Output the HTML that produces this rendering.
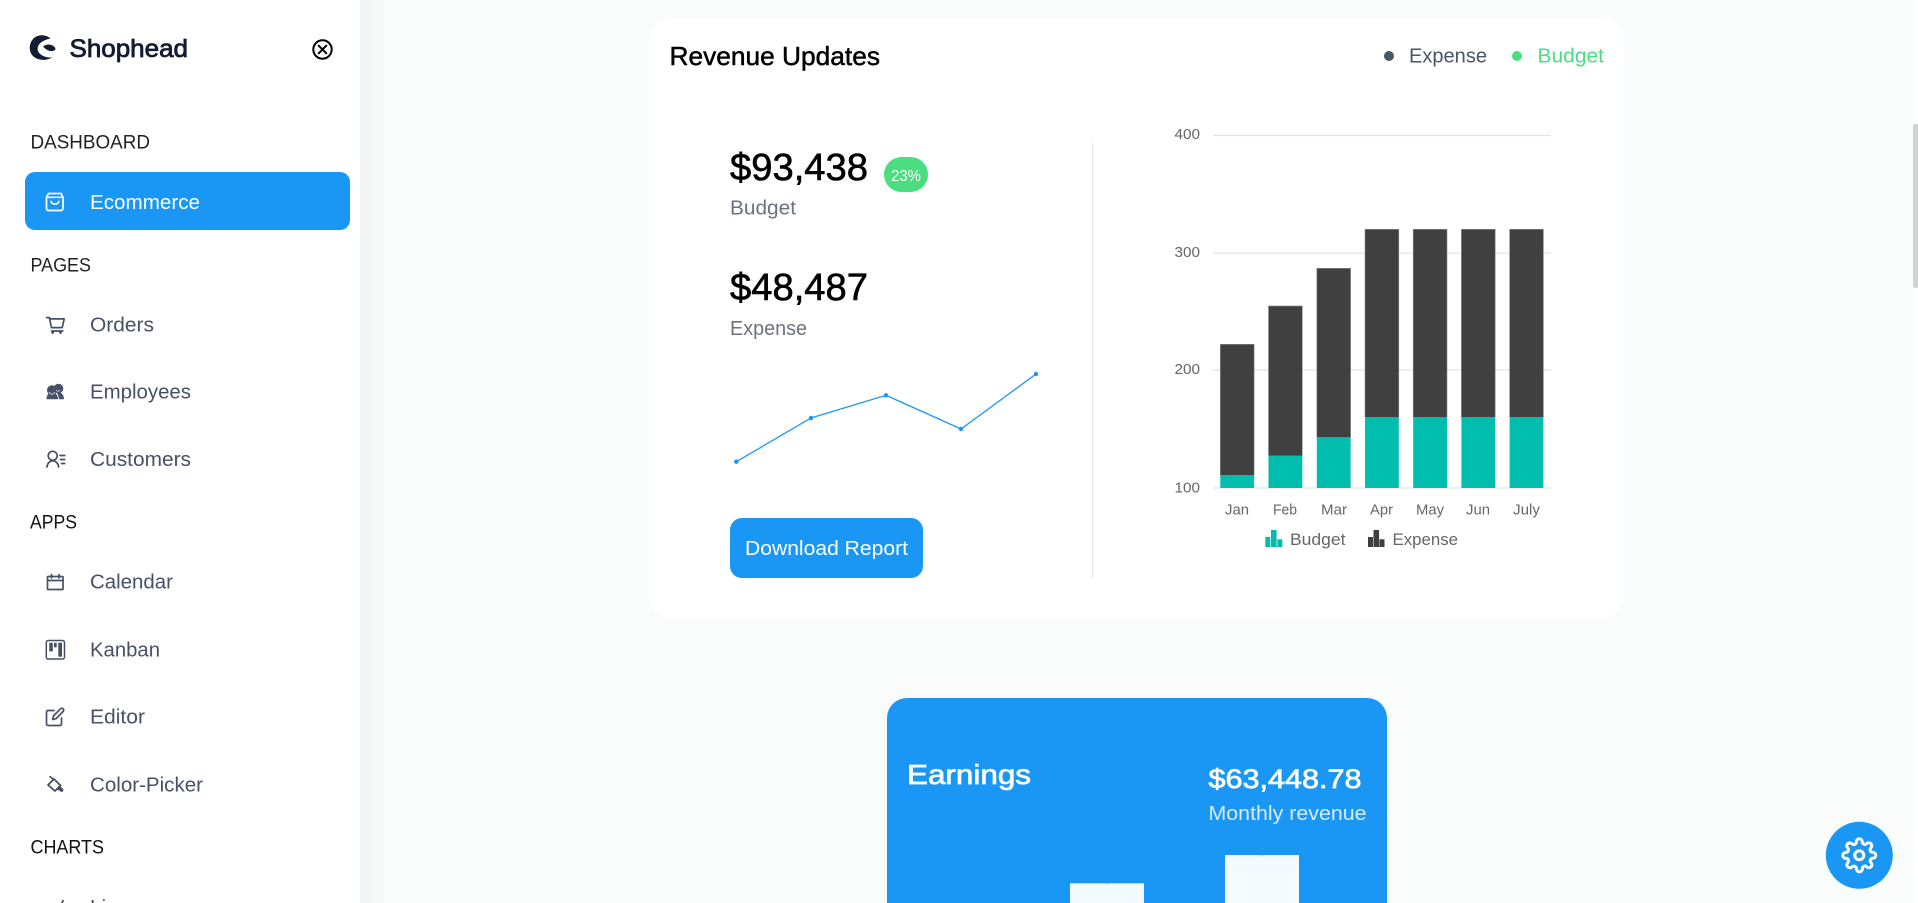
<!DOCTYPE html>
<html lang="en">
<head>
<meta charset="utf-8">
<title>Shophead</title>
<style>
html,body{margin:0;padding:0;width:1918px;height:903px;overflow:hidden;background:#fafbfb}
svg{display:block}
text{font-family:"Liberation Sans",Arial,sans-serif}
.nav{font-size:20px;fill:#475166}
.cat{font-size:19.5px;fill:#1f2124}
.ic{fill:none;stroke:#475166;stroke-width:1.7;stroke-linecap:round;stroke-linejoin:round}
.ax{font-size:14.5px;fill:#666}
.grid{stroke:#e4e4e4;stroke-width:1.2}
.d{fill:#404040;stroke:#8c8c8c;stroke-width:.6}
.t{fill:#00bdae}
</style>
</head>
<body>
<svg width="1918" height="903" viewBox="0 0 1918 903" xmlns="http://www.w3.org/2000/svg">
<defs>
<linearGradient id="sh" x1="0" x2="1" y1="0" y2="0">
<stop offset="0" stop-color="#f2f4f4"/><stop offset="1" stop-color="#fafbfb"/>
</linearGradient>
</defs>
<rect width="1918" height="903" fill="#fafbfb"/>
<rect x="360" y="0" width="26" height="903" fill="url(#sh)"/>
<rect x="0" y="0" width="360" height="903" fill="#fff"/>
<rect x="1913" y="0" width="5" height="903" fill="#fdfefe"/>
<path d="M1918 124h-3a2 2 0 0 0-2 2v160a2 2 0 0 0 2 2h3z" fill="#d3d3d3"/>

<!-- Logo -->
<path d="M50.5 38.5C46 34.3 38 34 33.5 38.5C28.5 43.5 28.5 52 33.5 56.5C38 60.5 46 61 52.5 57.5C47 58 40 56 38 51C36.500 45 41 40.500 50.5 38.5Z" fill="#131c31"/>
<path d="M43 46.500C47 43.500 52 44 55 47.5L55.5 49.5C53 52 48 52 43 46.500Z" fill="#131c31"/>
<text x="69.5" y="57" font-size="25" fill="#131c31" stroke="#131c31" stroke-width=".8" textLength="118.500" lengthAdjust="spacingAndGlyphs">Shophead</text>
<g fill="none" stroke="#000" stroke-width="2" stroke-linecap="round">
<circle cx="322.5" cy="49.5" r="9.2"/>
<path d="M318.7 45.7l7.6 7.6M326.3 45.7l-7.6 7.6"/>
</g>

<!-- Sidebar -->
<text class="cat" x="30.5" y="148.5" textLength="119.5" lengthAdjust="spacingAndGlyphs">DASHBOARD</text>
<rect x="25" y="172" width="325" height="58" rx="10" fill="#1a97f5"/>
<g fill="none" stroke="#fff" stroke-width="1.7" stroke-linecap="round" stroke-linejoin="round">
<path d="M48.5 193.5h12.5l2 3.7v11.3a2 2 0 0 1-2 2H48.5a2 2 0 0 1-2-2V197.2z"/>
<path d="M46.8 197.3h16"/>
<path d="M51 201.5c.6 3.4 7.2 3.4 7.8 0"/>
</g>
<text class="nav" x="90" y="209" style="fill:#fff" textLength="110" lengthAdjust="spacingAndGlyphs">Ecommerce</text>

<text class="cat" x="30.5" y="271.5" textLength="60.5" lengthAdjust="spacingAndGlyphs">PAGES</text>

<g class="ic" stroke-width="1.6">
<path d="M46.7 317.6h2.7l2 10h10.800l2-8.700H49.700"/>
<path d="M51.500 331h11.300"/>
</g>
<circle cx="52.7" cy="332.5" r="1.4" fill="#475166"/><circle cx="60.5" cy="332.5" r="1.4" fill="#475166"/>
<text class="nav" x="90" y="331.5" textLength="64" lengthAdjust="spacingAndGlyphs">Orders</text>

<g fill="#475166">
<circle cx="52" cy="390.300" r="5"/>
<circle cx="58.5" cy="388.500" r="4.800"/>
<path d="M46.5 399.300c0-4.800 2.800-7 5.500-7s6 2.200 6 7z"/>
<path d="M56.500 392.500c4-1 7.500 1.700 7.500 6.800h-5.200c0-2.800-.8-5-2.300-6.800z"/>
</g>
<g fill="none" stroke="#fff" stroke-width=".7"><path d="M49 392.300l3 2.300 3-2.300"/><path d="M56 390.500c1.500.8 3 .8 4.500 0"/></g>
<text class="nav" x="90" y="398.5" textLength="101" lengthAdjust="spacingAndGlyphs">Employees</text>

<g class="ic" stroke-width="1.5">
<circle cx="52.700" cy="455.800" r="4.500"/>
<path d="M47 467c.3-3.800 2.800-6.200 5.800-6.200s5.500 2.400 5.800 6.200"/>
<path d="M60 455.500h4.700M60.500 459.500h4.200M61.500 463.500h3.200"/>
</g>
<text class="nav" x="90" y="466" textLength="101" lengthAdjust="spacingAndGlyphs">Customers</text>

<text class="cat" x="30" y="528.5" style="fill:#111" textLength="47" lengthAdjust="spacingAndGlyphs">APPS</text>

<g class="ic">
<rect x="47.5" y="576.5" width="15.500" height="13" rx=".8"/>
<path d="M47.5 580.5h15.500M51.5 574.500v3.500M59 574.500v3.500"/>
</g>
<text class="nav" x="90" y="588.5" textLength="83" lengthAdjust="spacingAndGlyphs">Calendar</text>

<rect x="46.300" y="640.500" width="18.200" height="18.500" rx="2" fill="none" stroke="#475166" stroke-width="1.500"/>
<rect x="49.300" y="642.700" width="3.500" height="8.800" rx=".7" fill="#475166"/>
<rect x="54" y="642.700" width="2.700" height="4.700" rx=".6" fill="#475166"/>
<rect x="58.300" y="642.700" width="3.700" height="14" rx=".7" fill="#475166"/>
<text class="nav" x="90" y="656.5" textLength="70" lengthAdjust="spacingAndGlyphs">Kanban</text>

<g class="ic" stroke-width="1.800">
<path d="M54 710.500h-6a1.500 1.500 0 0 0-1.500 1.500v12a1.500 1.500 0 0 0 1.500 1.500h12a1.500 1.500 0 0 0 1.500-1.500v-6"/>
<path d="M60.500 708.800a1.800 1.800 0 0 1 2.700 2.600l-7 7.200-3.600.9.900-3.600z"/>
</g>
<text class="nav" x="90" y="723.5" textLength="55" lengthAdjust="spacingAndGlyphs">Editor</text>

<path d="M54 779L60.500 785.500L55 791L48 785Z" fill="none" stroke="#475166" stroke-width="1.800" stroke-linejoin="round"/>
<path d="M50 776.700l4 3" stroke="#475166" stroke-width="1.600" fill="none" stroke-linecap="round"/>
<path d="M56 789.500L60.500 785.500L62 788.500L59 790.500Z" fill="#475166"/>
<circle cx="61.500" cy="790" r="1.900" fill="#475166"/>
<text class="nav" x="90" y="791.5" textLength="113" lengthAdjust="spacingAndGlyphs">Color-Picker</text>

<text class="cat" x="30.5" y="853.5" style="fill:#111" textLength="73.5" lengthAdjust="spacingAndGlyphs">CHARTS</text>
<path d="M47 913l7-7 4 4 5.500-10" fill="none" stroke="#475166" stroke-width="1.700"/>
<text class="nav" x="90" y="914" textLength="39" lengthAdjust="spacingAndGlyphs">Line</text>

<!-- Revenue card -->
<rect x="649" y="18" width="975" height="600" rx="22" fill="#fff"/>
<text x="669.5" y="65" font-size="26" fill="#000" stroke="#000" stroke-width=".5" textLength="210.5" lengthAdjust="spacingAndGlyphs">Revenue Updates</text>

<circle cx="1389" cy="56" r="5" fill="#4b5563"/>
<text x="1409" y="62.7" font-size="20.5" fill="#4b5563" textLength="78" lengthAdjust="spacingAndGlyphs">Expense</text>
<circle cx="1517" cy="56" r="5" fill="#4ade80"/>
<text x="1537.5" y="62.7" font-size="20.5" fill="#4ade80" textLength="66.5" lengthAdjust="spacingAndGlyphs">Budget</text>

<text x="730" y="180" font-size="38" fill="#000" stroke="#000" stroke-width=".6" textLength="138" lengthAdjust="spacingAndGlyphs">$93,438</text>
<rect x="884" y="157" width="44" height="35" rx="17.5" fill="#4ade80"/>
<text x="891" y="181" font-size="15.5" fill="#fff" textLength="30" lengthAdjust="spacingAndGlyphs">23%</text>
<text x="730" y="214.5" font-size="20" fill="#6b7280" textLength="66" lengthAdjust="spacingAndGlyphs">Budget</text>
<text x="730" y="300" font-size="38" fill="#000" stroke="#000" stroke-width=".6" textLength="138" lengthAdjust="spacingAndGlyphs">$48,487</text>
<text x="730" y="335" font-size="20" fill="#6b7280" textLength="77" lengthAdjust="spacingAndGlyphs">Expense</text>

<path d="M1092.6 143V578" stroke="#e5e7eb" stroke-width="1.2"/>

<polyline points="736.3,461.7 811,418 886,395.3 961,429 1036,374" fill="none" stroke="#1a97f5" stroke-width="1.3"/>
<g fill="#1a97f5">
<circle cx="736.3" cy="461.7" r="2.2"/><circle cx="811" cy="418" r="2.2"/><circle cx="886" cy="395.3" r="2.2"/><circle cx="961" cy="429" r="2.2"/><circle cx="1036" cy="374" r="2.2"/>
</g>

<rect x="730" y="518" width="193" height="60" rx="12" fill="#1a97f5"/>
<text x="745" y="555" font-size="20.5" fill="#fff" textLength="163" lengthAdjust="spacingAndGlyphs">Download Report</text>

<!-- Stacked chart -->
<path class="grid" d="M1213 135.5H1551M1213 253H1551M1213 370H1551M1213 488H1551"/>
<text class="ax" x="1174.500" y="139" textLength="25.5" lengthAdjust="spacingAndGlyphs">400</text>
<text class="ax" x="1174.500" y="257" textLength="25.5" lengthAdjust="spacingAndGlyphs">300</text>
<text class="ax" x="1174.500" y="374" textLength="25.5" lengthAdjust="spacingAndGlyphs">200</text>
<text class="ax" x="1174.500" y="492.5" textLength="25.5" lengthAdjust="spacingAndGlyphs">100</text>

<rect class="d" x="1220.3" y="344.3" width="33.8" height="131"/>
<rect class="d" x="1268.5" y="306" width="33.8" height="150"/>
<rect class="d" x="1316.8" y="268.3" width="33.8" height="169"/>
<rect class="d" x="1365" y="229.3" width="33.8" height="188"/>
<rect class="d" x="1413.2" y="229.3" width="33.8" height="188"/>
<rect class="d" x="1461.4" y="229.3" width="33.8" height="188"/>
<rect class="d" x="1509.6" y="229.3" width="33.8" height="188"/>
<rect class="t" x="1220.3" y="475" width="33.8" height="13"/>
<rect class="t" x="1268.5" y="455.7" width="33.8" height="32.3"/>
<rect class="t" x="1316.8" y="437" width="33.8" height="51"/>
<rect class="t" x="1365" y="417.3" width="33.8" height="70.7"/>
<rect class="t" x="1413.2" y="417.3" width="33.8" height="70.7"/>
<rect class="t" x="1461.4" y="417.3" width="33.8" height="70.7"/>
<rect class="t" x="1509.6" y="417.3" width="33.8" height="70.7"/>

<text class="ax" x="1225" y="514.3" textLength="24" lengthAdjust="spacingAndGlyphs">Jan</text>
<text class="ax" x="1273" y="514.3" textLength="24" lengthAdjust="spacingAndGlyphs">Feb</text>
<text class="ax" x="1321" y="514.3" textLength="26" lengthAdjust="spacingAndGlyphs">Mar</text>
<text class="ax" x="1370" y="514.3" textLength="23" lengthAdjust="spacingAndGlyphs">Apr</text>
<text class="ax" x="1416" y="514.3" textLength="28" lengthAdjust="spacingAndGlyphs">May</text>
<text class="ax" x="1466" y="514.3" textLength="24" lengthAdjust="spacingAndGlyphs">Jun</text>
<text class="ax" x="1513" y="514.3" textLength="27" lengthAdjust="spacingAndGlyphs">July</text>

<g fill="#00bdae">
<rect x="1265.3" y="537" width="5" height="10"/><rect x="1271" y="530" width="5.6" height="17"/><rect x="1277.3" y="539.3" width="5" height="7.7"/>
</g>
<text x="1290" y="545" font-size="16.5" fill="#666" textLength="55.5" lengthAdjust="spacingAndGlyphs">Budget</text>
<g fill="#404040">
<rect x="1368" y="537" width="5" height="10"/><rect x="1373.5" y="530" width="5.6" height="17"/><rect x="1379.5" y="539.3" width="5" height="7.7"/>
</g>
<text x="1392.5" y="545" font-size="16.5" fill="#666" textLength="65.5" lengthAdjust="spacingAndGlyphs">Expense</text>

<!-- Earnings card -->
<path d="M887 903V718a20 20 0 0 1 20-20H1367a20 20 0 0 1 20 20V903z" fill="#1a97f5"/>
<text x="907" y="784" font-size="28" fill="#fff" stroke="#fff" stroke-width=".7" textLength="124" lengthAdjust="spacingAndGlyphs">Earnings</text>
<text x="1208.5" y="788" font-size="27" fill="#fff" stroke="#fff" stroke-width=".7" textLength="153" lengthAdjust="spacingAndGlyphs">$63,448.78</text>
<text x="1208.5" y="820" font-size="20" fill="#d8ebfc" textLength="158" lengthAdjust="spacingAndGlyphs">Monthly revenue</text>
<rect x="1070" y="883.3" width="74" height="20" fill="#f3fbff"/>
<rect x="1225" y="855" width="74" height="48" fill="#f3fbff"/>
<path d="M1105.7 883.3l1.3 1.8 1.300-1.800zM1260.700 855l1.300 1.800 1.300-1.800z" fill="#9fd3fa"/>

<!-- Settings FAB -->
<circle cx="1859.3" cy="855.3" r="33.5" fill="#1a97f5"/>
<g transform="translate(1841.3 837.3) scale(1.5)" fill="none" stroke="#fff" stroke-width="2" stroke-linecap="round" stroke-linejoin="round">
<circle cx="12" cy="12" r="3"/>
<path d="M19.4 15a1.65 1.65 0 0 0 .33 1.82l.06.06a2 2 0 0 1 0 2.83 2 2 0 0 1-2.83 0l-.06-.06a1.65 1.65 0 0 0-1.82-.33 1.65 1.65 0 0 0-1 1.51V21a2 2 0 0 1-2 2 2 2 0 0 1-2-2v-.09A1.65 1.65 0 0 0 9 19.4a1.65 1.65 0 0 0-1.82.33l-.06.06a2 2 0 0 1-2.83 0 2 2 0 0 1 0-2.83l.06-.06a1.65 1.65 0 0 0 .33-1.82 1.65 1.65 0 0 0-1.51-1H3a2 2 0 0 1-2-2 2 2 0 0 1 2-2h.09A1.65 1.65 0 0 0 4.6 9a1.65 1.65 0 0 0-.33-1.82l-.06-.06a2 2 0 0 1 0-2.83 2 2 0 0 1 2.83 0l.06.06a1.65 1.65 0 0 0 1.82.33H9a1.65 1.65 0 0 0 1-1.51V3a2 2 0 0 1 2-2 2 2 0 0 1 2 2v.09a1.65 1.65 0 0 0 1 1.51 1.65 1.65 0 0 0 1.82-.33l.06-.06a2 2 0 0 1 2.83 0 2 2 0 0 1 0 2.83l-.06.06a1.65 1.65 0 0 0-.33 1.82V9a1.65 1.65 0 0 0 1.51 1H21a2 2 0 0 1 2 2 2 2 0 0 1-2 2h-.09a1.65 1.65 0 0 0-1.51 1z"/>
</g>
</svg>
</body>
</html>
